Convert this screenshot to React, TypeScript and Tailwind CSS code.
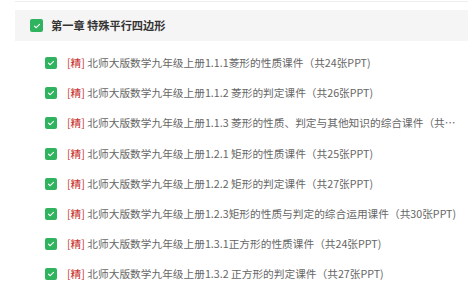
const items = [
  '北师大版数学九年级上册1.1.1菱形的性质课件（共24张PPT)',
  '北师大版数学九年级上册1.1.2 菱形的判定课件（共26张PPT)',
  '北师大版数学九年级上册1.1.3 菱形的性质、判定与其他知识的综合课件（共31张PPT)',
  '北师大版数学九年级上册1.2.1 矩形的性质课件（共25张PPT)',
  '北师大版数学九年级上册1.2.2 矩形的判定课件（共27张PPT)',
  '北师大版数学九年级上册1.2.3矩形的性质与判定的综合运用课件（共30张PPT)',
  '北师大版数学九年级上册1.3.1正方形的性质课件（共24张PPT)',
  '北师大版数学九年级上册1.3.2 正方形的判定课件（共27张PPT)',
]

function Check({ size = 'w-[12px] h-[12px]' }: { size?: string }) {
  return (
    <span className={`${size} shrink-0 rounded-[2px] bg-[#2fb35e] flex items-center justify-center`}>
      <svg viewBox="0 0 12 12" className="w-[8px] h-[8px]" fill="none">
        <path d="M2.2 6.2 L4.8 8.6 L9.8 3.4" stroke="white" strokeWidth="1.6" strokeLinecap="round" strokeLinejoin="round" />
      </svg>
    </span>
  )
}

export default function App() {
  return (
    <div className="w-[468px] h-[290px] bg-white overflow-hidden pl-[15px]" style={{ fontFamily: '"Microsoft YaHei", "Noto Sans CJK SC", "Noto Sans", sans-serif' }}>
      <div className="mt-[1px] h-px bg-[#eeeeee]" />
      <div className="mt-[8px] h-[31px] bg-[#f5f5f5] flex items-center pl-[15px] gap-[8px]">
        <Check size="w-[13px] h-[13px]" />
        <span className="text-[11.2px] font-bold text-[#333]">第一章 特殊平行四边形</span>
      </div>
      <ul className="mt-[7px]">
        {items.map((t) => (
          <li key={t} className="h-[30.2px] flex items-center pl-[30px] pr-[11px] gap-[10px]">
            <Check />
            <span className="text-[10.7px] text-[#666] truncate leading-[16px]">
              <span className="text-[#c8322c]">[精]</span> {t}
            </span>
          </li>
        ))}
      </ul>
    </div>
  )
}
